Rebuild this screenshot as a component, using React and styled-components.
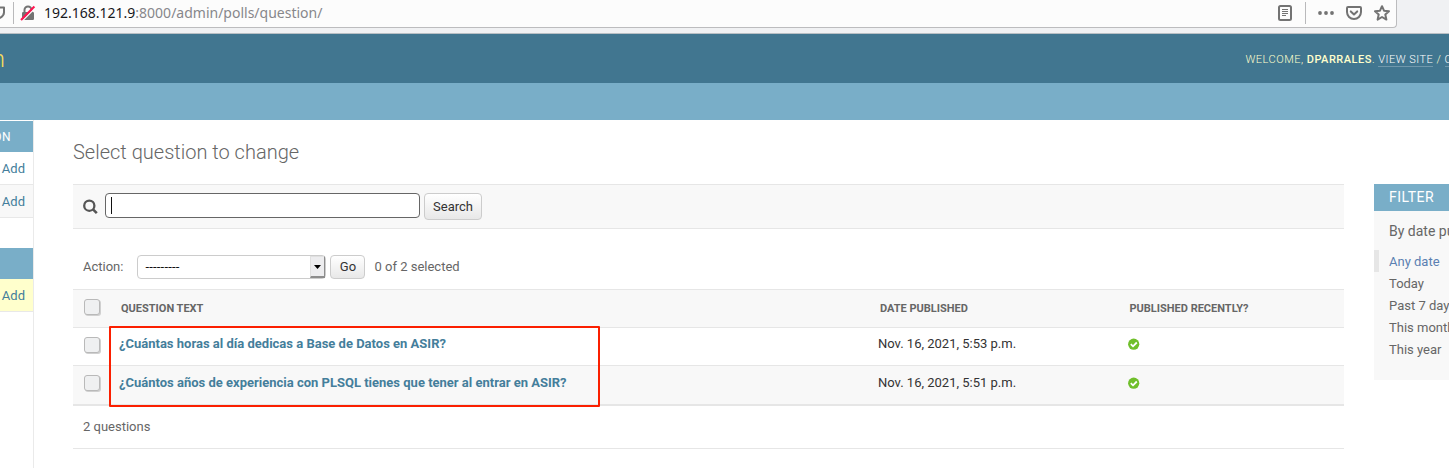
import React from "react";
import styled, { createGlobalStyle } from "styled-components";

const Global = createGlobalStyle`
  *, *::before, *::after { box-sizing: border-box; }
  html, body { margin: 0; padding: 0; background: #fff; overflow: hidden; }
  body { font: 13px/16px Roboto, "Liberation Sans", sans-serif; color: #333; }
`;

const Page = styled.div`
  width: 1449px;
  height: 468px;
  overflow: hidden;
  display: flex;
  flex-direction: column;
`;

/* Browser toolbar */
const BrowserBar = styled.div`
  height: 34px;
  flex: none;
  background: #f0f1f3;
  border-bottom: 1px solid #b9bfc4;
`;
const UrlField = styled.div`
  width: 1397px;
  height: 28px;
  display: flex;
  align-items: center;
  background: #fcfcfc;
  border: solid #bcbcbe;
  border-width: 0 1px 1px 0;
  border-radius: 0 0 4px 0;
  padding: 0 6px 2px 0;
`;
const Divider = styled.i`
  width: 1px;
  height: 22px;
  background: #b9b9bb;
  margin: 0 ${(p) => p.$right}px 0 ${(p) => p.$left}px;
`;
const Url = styled.div`
  flex: 1;
  margin-left: 8px;
  font: 14px/20px "Noto Sans", sans-serif;
  color: #18181c;
  white-space: nowrap;
`;
const UrlPath = styled.span`
  color: #87878b;
`;
const Icon = styled.svg`
  display: block;
  flex: none;
  margin-left: ${(p) => p.$left || 0}px;
`;

/* Admin header */
const Header = styled.header`
  height: 49px;
  flex: none;
  display: flex;
  justify-content: space-between;
  align-items: center;
  overflow: hidden;
  background: #417690;
`;
const Brand = styled.div`
  width: 5px;
  display: flex;
  justify-content: flex-end;
  font-size: 24px;
  line-height: 24px;
  font-weight: 300;
  color: #f5dd5d;
`;
const UserTools = styled.div`
  width: 203.5px;
  padding-top: 2px;
  white-space: nowrap;
  font-size: 11px;
  line-height: 14px;
  font-weight: 300;
  letter-spacing: 0.5px;
  color: #ffc;
`;
const UserName = styled.strong`
  font-weight: 500;
`;
const ToolLink = styled.a`
  color: #fff;
  border-bottom: 1px solid rgba(255, 255, 255, 0.25);
`;
const Breadcrumbs = styled.div`
  height: 37px;
  flex: none;
  background: #79aec8;
`;

const Body = styled.div`
  flex: 1;
  display: flex;
  overflow: hidden;
`;

/* Left navigation */
const Sidebar = styled.nav`
  width: 34px;
  flex: none;
  padding-top: 1px;
  border-right: 1px solid #eaeaea;
`;
const Module = styled.section`
  margin-bottom: 30px;
`;
const Caption = styled.div`
  height: 31px;
  overflow: hidden;
  display: flex;
  align-items: center;
  justify-content: flex-end;
  padding-right: 22px;
  background: #79aec8;
  color: #fff;
  font-size: 12px;
  letter-spacing: 0.5px;
`;
const AddRow = styled.div`
  height: 33px;
  display: flex;
  align-items: center;
  justify-content: flex-end;
  padding: 2px 8px 0 0;
  border-bottom: 1px solid #e8e8e8;
  background: ${(p) => p.$bg || "#fff"};
  color: #447e9b;
`;

/* Main column */
const Main = styled.main`
  width: 1271px;
  flex: none;
  margin-left: 39px;
`;
const Title = styled.h1`
  margin: 0;
  height: 64px;
  padding-top: 20px;
  font-size: 20px;
  line-height: 24px;
  font-weight: 300;
  color: #666;
`;
const SearchBar = styled.div`
  height: 45px;
  display: flex;
  align-items: flex-start;
  padding: 8px 10px 0;
  background: #f8f8f8;
  border: solid #e6e6e6;
  border-width: 1px 0;
`;
const SearchInput = styled.div`
  width: 315px;
  height: 25px;
  margin: 0 4px 0 7px;
  padding: 3px 5px;
  background: #fff;
  border: 1px solid #666;
  border-radius: 4px;
`;
const Caret = styled.i`
  display: block;
  width: 1px;
  height: 17px;
  background: #111;
`;
const Button = styled.button`
  width: ${(p) => p.$w}px;
  height: ${(p) => p.$h}px;
  padding: 0;
  border: 1px solid #ccc;
  border-radius: 4px;
  background: linear-gradient(#fff, #e8e8e8);
  font: 13px/16px Roboto, sans-serif;
  color: #333;
`;
const Actions = styled.div`
  height: 60px;
  display: flex;
  align-items: center;
  padding: 16px 10px 0;
  color: #666;
`;
const Select = styled.div`
  width: 189px;
  height: 24px;
  margin: 0 4px 0 14px;
  padding-left: 7px;
  display: flex;
  justify-content: space-between;
  border: 1px solid #ccc;
  border-radius: 4px;
  line-height: 21px;
  color: #111;
`;
const Dashes = styled.span`
  letter-spacing: 0.2px;
`;
const Arrow = styled.span`
  width: 15px;
  height: 22px;
  display: flex;
  align-items: center;
  justify-content: center;
  background: #ededef;
  border: solid;
  border-width: 1px 1px 2px 1px;
  border-color: #e0e0e0 #8d8d8d #8d8d8d #e0e0e0;
`;
const Counter = styled.span`
  margin-left: 9px;
`;
const Results = styled.div`
  position: relative;
  border-top: 1px solid #e6e6e6;
  border-bottom: 1px solid #e6e6e6;
`;
const Row = styled.div`
  display: grid;
  grid-template-columns: 46px 759px 249.5px 1fr;
  height: ${(p) => p.$h}px;
  padding-top: ${(p) => p.$top}px;
  background: ${(p) => (p.$shade ? "#f8f8f8" : "#fff")};
  border-bottom: 1px solid #e6e6e6;
`;
const HeadCell = styled.div`
  padding: 3px 0 0 2px;
  font-size: 11px;
  font-weight: 700;
  color: #666;
`;
const Check = styled.span`
  display: block;
  width: 16px;
  height: 16px;
  margin: ${(p) => p.$top}px 0 0 11px;
  border: 1px solid #b9b9b9;
  border-radius: 3px;
  background: #eff0f1;
  box-shadow: 1px 1px 0 #d0d0d0;
`;
const QuestionLink = styled.a`
  font-weight: 700;
  color: #447e9b;
`;
const Status = styled.div`
  padding-top: 2px;
`;
const Highlight = styled.div`
  position: absolute;
  left: 36px;
  top: 36px;
  width: 491px;
  height: 81px;
  border: 2px solid #fb1f00;
  border-radius: 1px;
`;
const Paginator = styled.div`
  height: 43px;
  padding: 13px 10px 0;
  color: #666;
  border-top: 1px solid #e6e6e6;
`;

/* Filter column */
const Filter = styled.aside`
  width: 75px;
  height: 196px;
  flex: none;
  margin: 64px 0 0 30px;
  overflow: hidden;
  white-space: nowrap;
  background: #f8f8f8;
  color: #666;
`;
const FilterTitle = styled.h2`
  margin: 0;
  height: 27px;
  padding-left: 15px;
  background: #79aec8;
  color: #fff;
  font-size: 14px;
  line-height: 26px;
  font-weight: 400;
  letter-spacing: 0.5px;
`;
const FilterBy = styled.h3`
  margin: 0;
  height: 39px;
  padding: 12px 0 0 15px;
  font-size: 14px;
  line-height: 16px;
  font-weight: 400;
`;
const FilterItem = styled.div`
  height: 22px;
  line-height: 24px;
  padding-left: 10px;
  border-left: 5px solid ${(p) => (p.$on ? "#e6e6e6" : "transparent")};
  color: ${(p) => (p.$on ? "#5b80b2" : "#666")};
`;

const Yes = () => (
  <Icon width="12" height="12" viewBox="0 0 12 12">
    <circle cx="5.7" cy="6.2" r="5.6" fill="#70bf2b" />
    <path d="M2.8 6.2l2.2 2.1L8.8 4.5" fill="none" stroke="#fff" strokeWidth="1.8" />
  </Icon>
);

const rows = [
  { text: "¿Cuántas horas al día dedicas a Base de Datos en ASIR?", date: "Nov. 16, 2021, 5:53 p.m.", h: 38, top: 8, check: 1 },
  { text: "¿Cuántos años de experiencia con PLSQL tienes que tener al entrar en ASIR?", date: "Nov. 16, 2021, 5:51 p.m.", h: 39, top: 9, check: 0, shade: true },
];
const periods = ["Any date", "Today", "Past 7 days", "This month", "This year"];

export default function App() {
  return (
    <Page>
      <Global />
      <BrowserBar>
        <UrlField>
          <Icon width="6" height="16" viewBox="0 0 6 16">
            <path d="M-2 2.5H4V7.5Q4 11 -1 13.5" fill="none" stroke="#737373" strokeWidth="2" strokeLinejoin="round" />
          </Icon>
          <Divider $left={7} $right={6} />
          <Icon width="16" height="16" viewBox="0 0 16 16">
            <path d="M4.5 8V5a3.5 3.5 0 0 1 7 0v3" fill="none" stroke="#737373" strokeWidth="2" />
            <rect x="2" y="7" width="12" height="8" rx="1.2" fill="#737373" />
            <path d="M1.8 16.4L15.2 3" stroke="#fcfcfc" strokeWidth="1.4" />
            <path d="M1 15L14.4 1.6" stroke="#ff1450" strokeWidth="2.1" />
          </Icon>
          <Url>
            192.168.121.9<UrlPath>:8000/admin/polls/question/</UrlPath>
          </Url>
          <Icon width="16" height="16" viewBox="0 0 16 16" fill="none" stroke="#737373">
            <rect x="2" y="1" width="12" height="14" rx="1.5" strokeWidth="2" />
            <path d="M5 4.5h6M5 6.5h6M5 8.5h6M5 10.5h4" strokeWidth="1" />
          </Icon>
          <Divider $left={12} $right={12} />
          <Icon width="16" height="16" viewBox="0 0 16 16" fill="#737373">
            <circle cx="2" cy="8" r="1.9" />
            <circle cx="8" cy="8" r="1.9" />
            <circle cx="14" cy="8" r="1.9" />
          </Icon>
          <Icon $left={12} width="16" height="16" viewBox="0 0 16 16" fill="none" stroke="#737373" strokeWidth="2" strokeLinejoin="round" strokeLinecap="round">
            <path d="M2 2H14Q15 2 15 3V7A7 7 0 0 1 1 7V3Q1 2 2 2Z" />
            <path d="M4.8 6.4L8 9.4L11.2 6.4" />
          </Icon>
          <Icon $left={12} width="16" height="16" viewBox="0 0 16 16" fill="none" stroke="#737373" strokeWidth="2" strokeLinejoin="round">
            <path d="M8 1.2L10 5.7L15 6.2L11.3 9.5L12.4 14.6L8 12L3.6 14.6L4.7 9.5L1 6.2L6 5.7Z" />
          </Icon>
        </UrlField>
      </BrowserBar>
      <Header>
        <Brand>n</Brand>
        <UserTools>
          WELCOME, <UserName>DPARRALES</UserName>. <ToolLink>VIEW SITE</ToolLink> / <ToolLink>CHANGE PASSWORD</ToolLink>
        </UserTools>
      </Header>
      <Breadcrumbs />
      <Body>
        <Sidebar>
          <Module>
            <Caption>ON</Caption>
            <AddRow>Add</AddRow>
            <AddRow $bg="#f8f8f8">Add</AddRow>
          </Module>
          <Module>
            <Caption />
            <AddRow $bg="#ffffcc">Add</AddRow>
          </Module>
        </Sidebar>
        <Main>
          <Title>Select question to change</Title>
          <SearchBar>
            <Icon width="15" height="29" viewBox="0 0 15 29" fill="none" stroke="#555" strokeWidth="2.3">
              <circle cx="6.3" cy="12.7" r="5.1" />
              <path d="M10 16.4L13.8 20.2" strokeWidth="2.6" />
            </Icon>
            <SearchInput><Caret /></SearchInput>
            <Button $w={58} $h={27}>Search</Button>
          </SearchBar>
          <Actions>
            Action:
            <Select>
              <Dashes>---------</Dashes>
              <Arrow>
                <Icon width="7" height="4" viewBox="0 0 7 4"><path d="M0 0H7L3.5 4Z" /></Icon>
              </Arrow>
            </Select>
            <Button $w={35} $h={24}>Go</Button>
            <Counter>0 of 2 selected</Counter>
          </Actions>
          <Results>
            <Row $h={38} $top={8} $shade>
              <Check $top={1} />
              <HeadCell>QUESTION TEXT</HeadCell>
              <HeadCell>DATE PUBLISHED</HeadCell>
              <HeadCell>PUBLISHED RECENTLY?</HeadCell>
            </Row>
            {rows.map((r) => (
              <Row key={r.text} $h={r.h} $top={r.top} $shade={r.shade}>
                <Check $top={r.check} />
                <QuestionLink>{r.text}</QuestionLink>
                <div>{r.date}</div>
                <Status><Yes /></Status>
              </Row>
            ))}
            <Paginator>2 questions</Paginator>
            <Highlight />
          </Results>
        </Main>
        <Filter>
          <FilterTitle>FILTER</FilterTitle>
          <FilterBy>By date published</FilterBy>
          {periods.map((p, i) => (
            <FilterItem key={p} $on={i === 0}>{p}</FilterItem>
          ))}
        </Filter>
      </Body>
    </Page>
  );
}
